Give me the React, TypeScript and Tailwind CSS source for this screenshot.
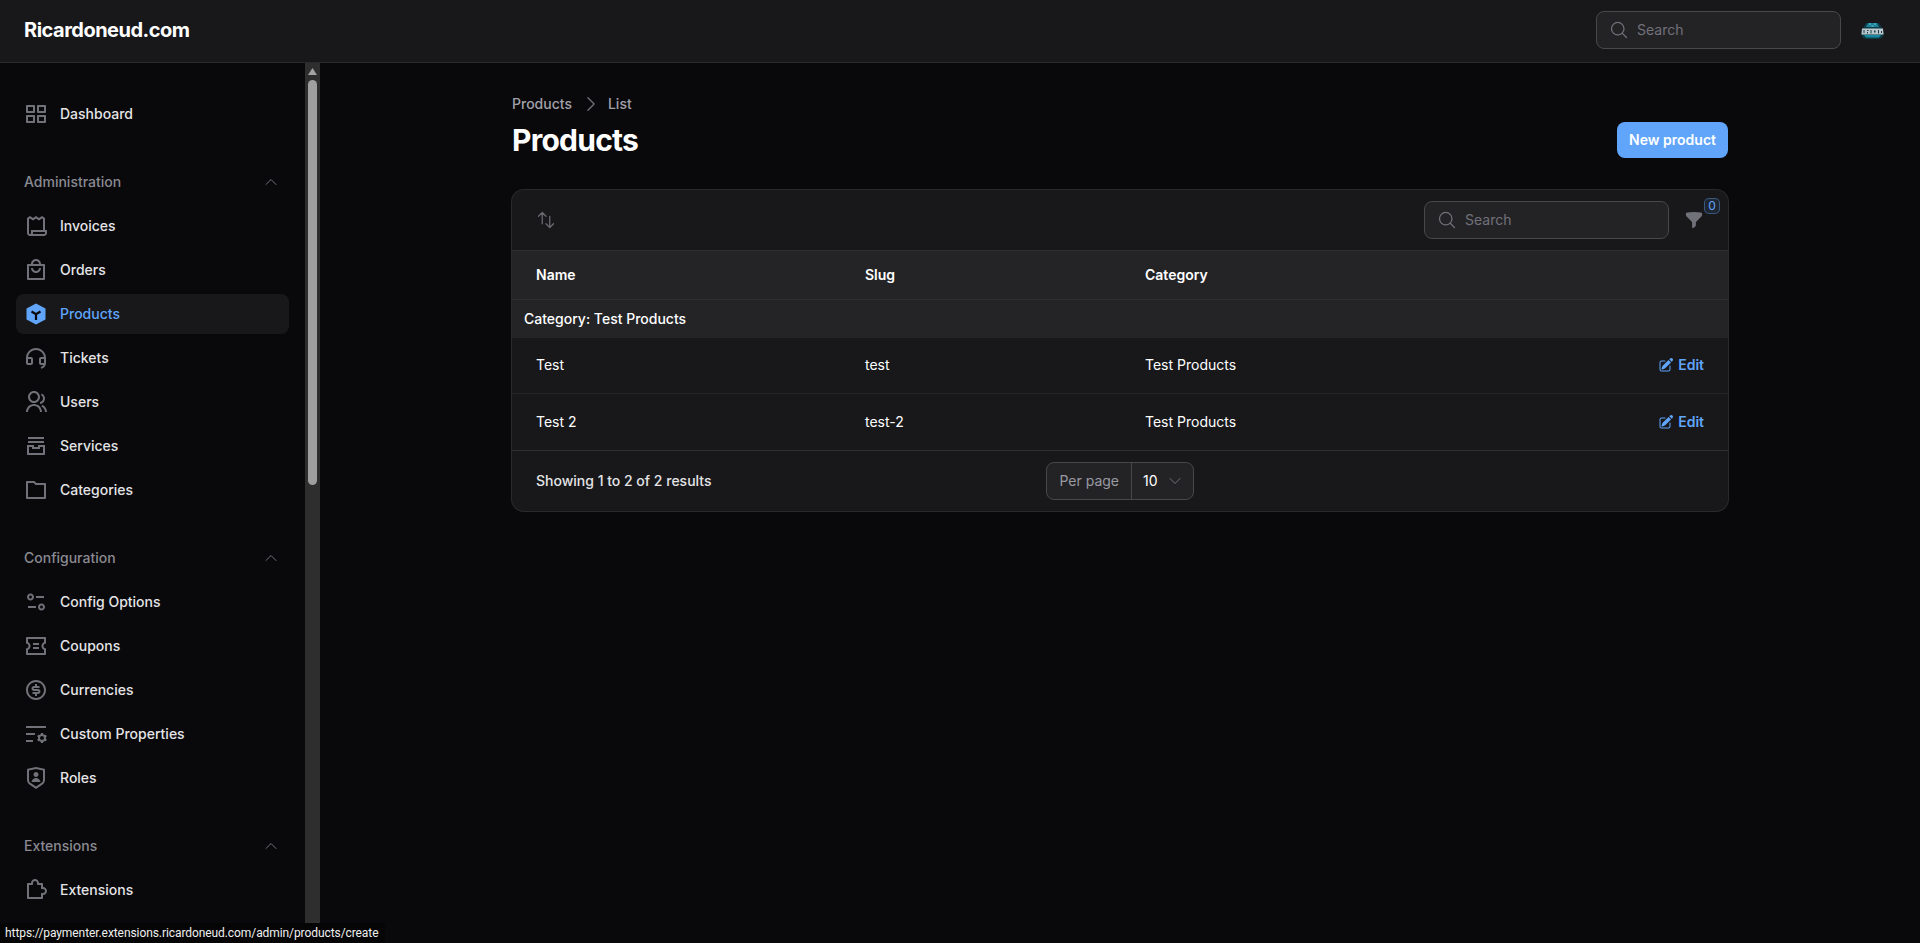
import type { ComponentType } from 'react';
import {
  HiOutlineMagnifyingGlass,
  HiOutlineChevronUp,
  HiOutlineChevronRight,
  HiOutlineChevronDown,
  HiOutlineArrowsUpDown,
  HiFunnel,
  HiPencilSquare,
} from 'react-icons/hi2';
import {
  RiGalleryView2,
  RiReceiptLine,
  RiShoppingBag4Line,
  RiCustomerServiceLine,
  RiGroupLine,
  RiArchiveStackLine,
  RiFolderLine,
  RiEqualizer2Line,
  RiCouponLine,
  RiMoneyDollarCircleLine,
  RiListSettingsLine,
  RiShieldUserLine,
  RiPuzzleLine,
} from 'react-icons/ri';

function ProductIcon({ className }: { className?: string }) {
  return (
    <svg viewBox="0 0 24 24" className={className}>
      <path d="M12 1.5 21.5 6.5v11L12 22.5 2.5 17.5v-11z" fill="currentColor" />
      <path d="M7.5 9.5 12 12.2l4.5-2.7M12 12.2V18" fill="none" stroke="#09090b" strokeWidth="2.2" />
    </svg>
  );
}

type NavItem = {
  label: string;
  icon: ComponentType<{ className?: string }>;
  active?: boolean;
};

const navGroups: { label?: string; items: NavItem[] }[] = [
  { items: [{ label: 'Dashboard', icon: RiGalleryView2 }] },
  {
    label: 'Administration',
    items: [
      { label: 'Invoices', icon: RiReceiptLine },
      { label: 'Orders', icon: RiShoppingBag4Line },
      { label: 'Products', icon: ProductIcon, active: true },
      { label: 'Tickets', icon: RiCustomerServiceLine },
      { label: 'Users', icon: RiGroupLine },
      { label: 'Services', icon: RiArchiveStackLine },
      { label: 'Categories', icon: RiFolderLine },
    ],
  },
  {
    label: 'Configuration',
    items: [
      { label: 'Config Options', icon: RiEqualizer2Line },
      { label: 'Coupons', icon: RiCouponLine },
      { label: 'Currencies', icon: RiMoneyDollarCircleLine },
      { label: 'Custom Properties', icon: RiListSettingsLine },
      { label: 'Roles', icon: RiShieldUserLine },
    ],
  },
  {
    label: 'Extensions',
    items: [{ label: 'Extensions', icon: RiPuzzleLine }],
  },
];

const products = [
  { name: 'Test', slug: 'test', category: 'Test Products' },
  { name: 'Test 2', slug: 'test-2', category: 'Test Products' },
];

function SearchBox() {
  return (
    <div className="flex h-[38px] w-[245px] items-center gap-2 rounded-lg border border-[#48484b] bg-[#232326] px-3">
      <HiOutlineMagnifyingGlass className="size-5 shrink-0 text-[#71717a]" />
      <span className="text-sm text-[#71717a]">Search</span>
    </div>
  );
}

function Logo() {
  return (
    <svg viewBox="0 0 25 17" className="h-[17px] w-[25px]">
      <path d="M6 1h13l3 5 2 6-2 4-4 1H7l-4-1-2-4 2-6z" fill="#0c3a46" />
      <path d="M8 1h9l2 4H6z" fill="#1f7f95" />
      <path d="M9 1.500h2v1H9zM14 1.500h2v1h-2zM11.500 3.500h2v1h-2z" fill="#5cc9de" />
      <path d="M2 6.500h21l.5 6H1.500z" fill="#b9c8cc" />
      <path d="M3.500 8h1v3h-1zM7 8h1.500v1H7zM7 10h1v1.500H7zM10.500 8h1v3.500h-1zM14 8.500h1.500v2H14zM18 8h1v3.500h-1zM21 9h1v2h-1z" fill="#1a3a44" />
      <path d="M4 13h17l-2 2.500H6z" fill="#178aa3" />
    </svg>
  );
}

function Sidebar() {
  return (
    <aside className="flex w-[320px] shrink-0">
      <nav className="flex w-[305px] flex-col gap-[28px] overflow-hidden px-4 pt-[31px]">
        {navGroups.map((group) => (
          <div key={group.label ?? 'main'} className="flex flex-col gap-1">
            {group.label && (
              <div className="flex h-10 shrink-0 items-center justify-between pl-2 pr-[10px]">
                <span className="text-sm font-medium text-[#8a8a92]">{group.label}</span>
                <HiOutlineChevronUp className="size-4 text-[#71717a]" />
              </div>
            )}
            {group.items.map((item) => (
              <div
                key={item.label}
                className={`flex h-10 shrink-0 items-center gap-3 rounded-lg px-2 ${item.active ? 'bg-[#18181b]' : ''}`}
              >
                <item.icon className={`size-6 shrink-0 ${item.active ? 'text-[#60a5fa]' : 'text-[#71717a]'}`} />
                <span className={`text-sm font-medium ${item.active ? 'text-[#60a5fa]' : 'text-[#e4e4e7]'}`}>
                  {item.label}
                </span>
              </div>
            ))}
          </div>
        ))}
      </nav>
      {/* Scrollbar */}
      <div className="flex w-[15px] shrink-0 flex-col items-center bg-[#2e2e2e]">
        <svg viewBox="0 0 9 7" className="mt-[5px] h-[7px] w-[9px]">
          <path d="M4.500 0 9 7H0z" fill="#a3a3a3" />
        </svg>
        <div className="mt-[5px] h-[405px] w-[9px] rounded-full bg-[#9f9f9f]" />
      </div>
    </aside>
  );
}

function ProductsTable() {
  return (
    <div className="mt-[32px] overflow-hidden rounded-xl bg-[#18181b] ring-1 ring-[#2a2a2d]">
      <div className="flex h-[60px] items-center justify-between px-6">
        <HiOutlineArrowsUpDown className="size-5 text-[#6a6a70]" />
        <div className="flex items-center">
          <SearchBox />
          <div className="relative ml-[15px]">
            <HiFunnel className="size-5 text-[#71717a]" />
            <span className="absolute -right-4 -top-3 flex h-4 w-4 items-center justify-center rounded-[5px] border border-[#60a5fa]/40 bg-[#60a5fa]/10 text-xs text-[#60a5fa]">
              0
            </span>
          </div>
        </div>
      </div>
      <table className="w-full table-fixed text-left text-sm">
        <thead>
          <tr className="h-[49px] border-y border-[#2f2f32] bg-[#242427] text-white">
            <th className="w-[341px] pl-6 font-semibold">Name</th>
            <th className="w-[280px] pl-3 font-semibold">Slug</th>
            <th className="pl-3 font-semibold">Category</th>
            <th className="w-[200px]" />
          </tr>
        </thead>
        <tbody>
          <tr className="h-[38px] bg-[#242427]">
            <td colSpan={4} className="pl-3 font-medium text-white">
              Category: Test Products
            </td>
          </tr>
          {products.map((p) => (
            <tr key={p.slug} className="h-[56px] border-b border-[#252528] text-white last:h-[57px] last:border-[#2f2f32]">
              <td className="pl-6">{p.name}</td>
              <td className="pl-3">{p.slug}</td>
              <td className="pl-3">{p.category}</td>
              <td className="pr-6">
                <div className="flex items-center justify-end gap-1 font-semibold text-[#60a5fa]">
                  <HiPencilSquare className="size-4" />
                  <span>Edit</span>
                </div>
              </td>
            </tr>
          ))}
        </tbody>
      </table>
      <div className="grid h-[60px] grid-cols-[1fr_auto_1fr] items-center px-6 pb-px text-sm">
        <span className="font-medium text-[#e4e4e7]">Showing 1 to 2 of 2 results</span>
        <div className="flex h-[38px] items-center rounded-lg border border-[#48484b] bg-[#232326]">
          <span className="flex h-full items-center border-r border-[#48484b] px-3 text-[#9a9aa2]">Per page</span>
          <span className="pl-[11px] text-white">10</span>
          <HiOutlineChevronDown className="ml-[9px] mr-[10px] size-4 text-[#71717a]" />
        </div>
        <span />
      </div>
    </div>
  );
}

export default function App() {
  return (
    <div className="relative flex h-[943px] w-[1920px] flex-col overflow-hidden bg-[#09090b] font-['Inter',sans-serif]">
      <header className="flex h-[63px] shrink-0 items-center justify-between border-b border-[#2a2a2d] bg-[#18181b] pb-[2px] pl-6 pr-[35px]">
        <span className="text-xl font-bold tracking-tight text-white">Ricardoneud.com</span>
        <div className="flex items-center gap-[19px]">
          <SearchBox />
          <Logo />
        </div>
      </header>
      <div className="flex min-h-0 flex-1">
        <Sidebar />
        <main className="min-w-0 flex-1">
          <div className="mx-auto max-w-7xl px-8 pt-[31px]">
            <div className="flex items-center text-sm font-medium text-[#a1a1aa]">
              <span>Products</span>
              <HiOutlineChevronRight className="ml-[9px] mr-[7px] size-5 text-[#71717a]" />
              <span>List</span>
            </div>
            <div className="mt-2 flex items-center justify-between">
              <h1 className="text-3xl font-bold tracking-tight text-white">Products</h1>
              <button className="flex h-9 items-center rounded-lg bg-[#60a5fa] px-3 text-sm font-semibold text-white">
                New product
              </button>
            </div>
            <ProductsTable />
          </div>
        </main>
      </div>
      <div className="absolute bottom-0 left-0 rounded-tr-[3px] bg-[#050505] py-[2px] pl-[5px] pr-[7px] font-['Roboto',sans-serif] text-xs tracking-[-0.08px] text-[#f0f0f0]">
        https://paymenter.extensions.ricardoneud.com/admin/products/create
      </div>
    </div>
  );
}
